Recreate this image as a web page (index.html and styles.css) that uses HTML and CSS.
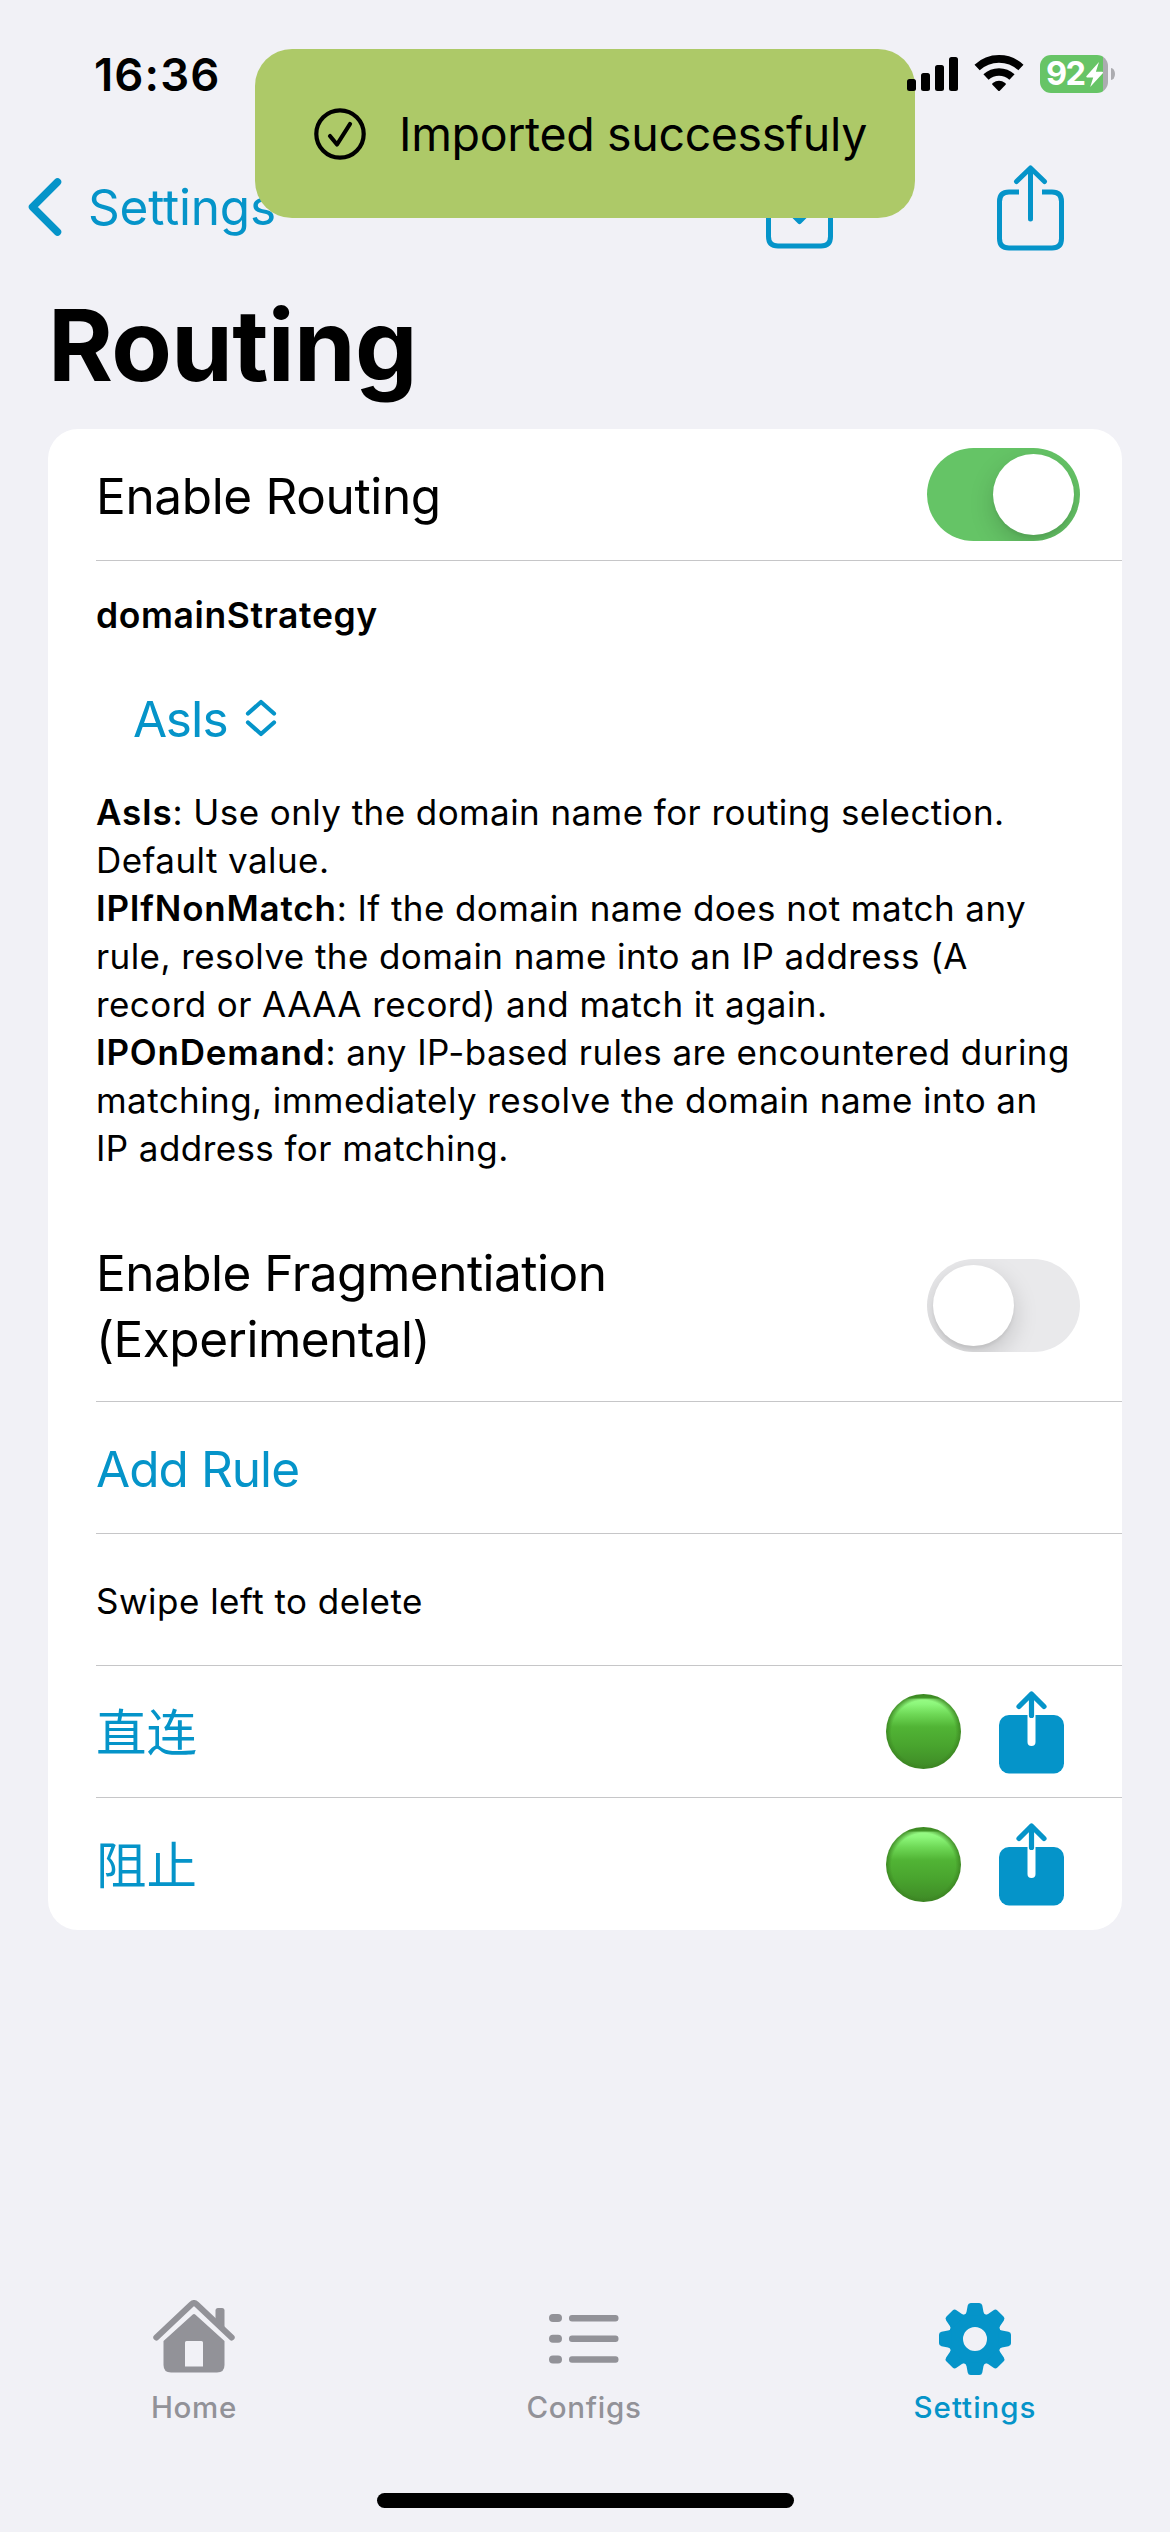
FILE: index.html
```html
<!DOCTYPE html>
<html lang="en">
<head>
<meta charset="utf-8">
<title>Routing</title>
<link rel="stylesheet" href="styles.css">
</head>
<body>
<div class="screen">
  <header class="status-bar">
    <span class="time">16:36</span>
    <div class="indicators">
      <svg class="signal" width="51" height="34" viewBox="0 0 51 34">
        <rect x="0" y="22" width="9" height="12" rx="2.5"/>
        <rect x="14" y="16" width="9" height="18" rx="2.5"/>
        <rect x="28" y="8" width="9" height="26" rx="2.5"/>
        <rect x="42" y="0" width="9" height="34" rx="2.5"/>
      </svg>
      <svg class="wifi" width="50" height="36" viewBox="-25 -36 50 36">
        <path class="wave" d="M-21.9-23.5A32.1 32.1 0 0 1 21.9-23.5"/>
        <path class="wave" d="M-13-13.9A19 19 0 0 1 13-13.9"/>
        <path d="M-6.8-6.5Q-7-7.4-6.2-8A10.8 10.8 0 0 1 6.2-8Q7-7.4 6.8-6.5L.8-.3Q0 .3-.8-.3Z"/>
      </svg>
      <div class="battery">
        <div class="cell">
          <span class="level">92</span>
          <svg width="17" height="25" viewBox="0 0 17 25"><path d="M13 0 .3 14.2Q0 15.2 1 15.4H7.2L4.2 25 17 11Q17.200 10 16.200 9.800H9.900Z"/></svg>
        </div>
        <div class="nub"></div>
      </div>
    </div>
  </header>

  <nav class="nav-bar">
    <a class="back">
      <svg width="34" height="58" viewBox="0 0 34 58"><path d="M29.500 4 4.500 29 29.500 54"/></svg>
      <span>Settings</span>
    </a>
    <div class="nav-actions">
      <svg width="67" height="86" viewBox="0 0 67 86">
        <path d="M22 25.500H12Q2.500 25.500 2.500 35V71.500Q2.500 81 12 81H55Q64.500 81 64.500 71.500V35Q64.500 25.500 55 25.500H45"/>
        <path class="round" d="M33.500 2.500V56M20 43 33.500 56.500 47 43"/>
      </svg>
      <svg width="67" height="86" viewBox="0 0 67 86">
        <path d="M22 27H12Q2.500 27 2.500 36.500V73.500Q2.500 83 12 83H55Q64.500 83 64.500 73.500V36.500Q64.500 27 55 27H45"/>
        <path class="round" d="M33.500 54V3.500M19.500 16.500 33.500 3 47.500 16.500"/>
      </svg>
    </div>
  </nav>

  <h1>Routing</h1>

  <main class="card">
    <section class="row">
      <span class="label">Enable Routing</span>
      <span class="toggle on"><i></i></span>
    </section>
    <section class="strategy">
      <h2>domainStrategy</h2>
      <div class="picker">
        <span>AsIs</span>
        <svg width="32" height="38" viewBox="0 0 32 38"><path d="M3 14.500 16 3 29 14.500M3 23.500 16 35 29 23.500"/></svg>
      </div>
      <p><b>AsIs</b>: Use only the domain name for routing selection.<br>Default value.<br><b>IPIfNonMatch</b>: If the domain name does not match any<br>rule, resolve the domain name into an IP address (A<br>record or AAAA record) and match it again.<br><b>IPOnDemand</b>: any IP-based rules are encountered during<br>matching, immediately resolve the domain name into an<br>IP address for matching.</p>
    </section>
    <section class="row fragment">
      <span>Enable Fragmentiation<br>(Experimental)</span>
      <span class="toggle"><i></i></span>
    </section>
    <section class="row link add"><span class="label">Add Rule</span></section>
    <section class="row hint"><span class="label">Swipe left to delete</span></section>
    <section class="row link">
      <span class="rule" lang="zh-CN">直连</span>
      <span class="rule-actions">
        <i class="dot"></i>
        <svg width="65" height="84" viewBox="0 0 65 84">
          <rect y="25" width="65" height="58.500" rx="10"/>
          <path class="slot" d="M32.500 22V52"/>
          <path class="arrow" d="M32.500 25.500V4M20 16.500 32.500 4 45 16.500"/>
        </svg>
      </span>
    </section>
    <section class="row link">
      <span class="rule" lang="zh-CN">阻止</span>
      <span class="rule-actions">
        <i class="dot"></i>
        <svg width="65" height="84" viewBox="0 0 65 84">
          <rect y="25" width="65" height="58.500" rx="10"/>
          <path class="slot" d="M32.500 22V52"/>
          <path class="arrow" d="M32.500 25.500V4M20 16.500 32.500 4 45 16.500"/>
        </svg>
      </span>
    </section>
  </main>

  <footer class="tab-bar">
    <a class="tab">
      <svg width="82" height="76" viewBox="0 0 82 76">
        <path class="roof" d="M3.300 37.500 38.500 4.200Q41 2 43.500 4.200L78.700 37.500"/>
        <path d="M62.500 20V10.500Q62.500 8 65 8H69Q71.500 8 71.500 10.500V29Z"/>
        <path fill-rule="evenodd" d="M10.500 41 39.500 14.700Q41 13.500 42.500 14.700L71.500 41V65Q71.500 72.500 64 72.500H18Q10.500 72.500 10.500 65ZM32 42.500V66.500H50V42.500Q50 41 48.500 41H33.500Q32 41 32 42.500Z"/>
      </svg>
      <span>Home</span>
    </a>
    <a class="tab">
      <svg width="70" height="76" viewBox="0 0 70 76">
        <rect x="0" y="14" width="13" height="8" rx="4"/><rect x="20" y="15" width="49.500" height="6.500" rx="3"/>
        <rect x="0" y="34.700" width="13" height="8" rx="4"/><rect x="20" y="35.500" width="49.500" height="6.500" rx="3"/>
        <rect x="0" y="55.500" width="13" height="8" rx="4"/><rect x="20" y="56.300" width="49.500" height="6.500" rx="3"/>
      </svg>
      <span>Configs</span>
    </a>
    <a class="tab active">
      <svg width="76" height="76" viewBox="-38 -39 76 76">
        <defs><path id="tooth" d="M-11.500-23.500Q-9-24.500-8.500-27L-7.300-33.500Q-6.800-36-4.300-36H4.300Q6.800-36 7.300-33.500L8.500-27Q9-24.500 11.500-23.500Z"/></defs>
        <circle r="19.200"/>
        <use href="#tooth"/><use href="#tooth" transform="rotate(45)"/><use href="#tooth" transform="rotate(90)"/><use href="#tooth" transform="rotate(135)"/><use href="#tooth" transform="rotate(180)"/><use href="#tooth" transform="rotate(225)"/><use href="#tooth" transform="rotate(270)"/><use href="#tooth" transform="rotate(315)"/>
      </svg>
      <span>Settings</span>
    </a>
  </footer>
  <div class="home-indicator"></div>

  <div class="toast">
    <svg width="52" height="52" viewBox="0 0 52 52"><circle cx="26" cy="26" r="23.700"/><path d="M16 28 23 36.500 36 16"/></svg>
    <span>Imported successfuly</span>
  </div>
</div>
</body>
</html>
```

FILE: styles.css
```css
* { box-sizing: border-box; }

body {
  margin: 0;
  background: #f1f1f6;
  color: #000;
  font-family: Inter, "Noto Sans CJK SC", sans-serif;
}

svg { display: block; flex: none; }

.screen {
  position: relative;
  width: 1170px;
  height: 2532px;
  display: flex;
  flex-direction: column;
}

/* Status bar */
.status-bar {
  position: relative;
  z-index: 2;
  height: 141px;
  padding: 55px 55px 0 94px;
  display: flex;
  justify-content: space-between;
  align-items: flex-start;
}

.time {
  font-size: 45.5px;
  font-weight: 600;
  line-height: 40px;
  letter-spacing: 1.1px;
}

.indicators { display: flex; align-items: flex-start; }
.signal { margin-top: 2px; }
.wifi { margin: 0 16px; }
.wave { fill: none; stroke: #000; stroke-width: 7.6; }

.battery { display: flex; align-items: center; gap: 3px; }

.cell {
  width: 68px;
  height: 38px;
  padding-left: 6px;
  border-radius: 11px;
  background: linear-gradient(90deg, #67c466 63px, #acacb0 63px);
  display: flex;
  align-items: center;
}

.level {
  width: 40px;
  color: #fff;
  font-size: 32.5px;
  font-weight: 700;
  line-height: 38px;
  letter-spacing: -1.5px;
}

.cell svg { fill: #fff; }

.nub {
  width: 4px;
  height: 12px;
  border-radius: 0 4px 4px 0 / 0 6px 6px 0;
  background: #acacb0;
}

/* Navigation */
.nav-bar {
  height: 132px;
  padding: 0 106px 0 28px;
  display: flex;
  align-items: center;
  justify-content: space-between;
  color: #0594c9;
}

.back {
  display: flex;
  align-items: center;
  gap: 26px;
  font-size: 49.5px;
  letter-spacing: -0.2px;
}

.back svg { fill: none; stroke: currentColor; stroke-width: 7.5; stroke-linecap: round; stroke-linejoin: round; }

.nav-actions { display: flex; gap: 164px; padding-top: 2px; }
.nav-actions svg { fill: none; stroke: currentColor; stroke-width: 5; stroke-linejoin: round; }
.nav-actions .round { stroke-linecap: round; }

h1 {
  margin: 0;
  padding-left: 48px;
  font-size: 99px;
  font-weight: 700;
  line-height: 144px;
  letter-spacing: -0.65px;
}

/* Settings card */
.card {
  margin: 12px 48px 0;
  border-radius: 30px;
  background: #fff;
}

.row {
  height: 132px;
  margin-left: 48px;
  padding-right: 42px;
  display: flex;
  align-items: center;
  justify-content: space-between;
  border-bottom: 1px solid #c6c6c8;
  font-size: 49.5px;
  line-height: 66px;
  letter-spacing: -0.35px;
}

.row:last-child { border-bottom: 0; }
.label { padding-top: 2px; }
.link { color: #0594c9; padding-right: 58px; }
.add { letter-spacing: -0.95px; }

.toggle {
  width: 153px;
  height: 93px;
  padding: 6px;
  border-radius: 47px;
  overflow: hidden;
  background: #e9e9eb;
  display: flex;
}

.toggle i {
  width: 81px;
  height: 81px;
  border-radius: 50%;
  background: #fff;
  box-shadow: 0 9px 24px rgba(0, 0, 0, 0.17), 0 3px 3px rgba(0, 0, 0, 0.05);
}

.toggle.on { background: #65c466; justify-content: flex-end; }

.strategy { padding: 31px 0 0 48px; }

h2 {
  margin: 0;
  font-size: 35.5px;
  font-weight: 600;
  line-height: 48px;
  letter-spacing: 0.62px;
}

.picker {
  margin-top: 47px;
  padding-left: 37px;
  display: flex;
  align-items: center;
  gap: 18px;
  color: #0594c9;
  font-size: 49.5px;
  line-height: 64px;
  letter-spacing: -1.35px;
}

.picker svg { margin-top: -2px; fill: none; stroke: currentColor; stroke-width: 4.200; stroke-linecap: round; stroke-linejoin: round; }

.strategy p {
  margin: 37px 0 0;
  font-size: 35px;
  line-height: 48px;
  letter-spacing: 0.42px;
  white-space: nowrap;
}

.strategy b { font-weight: 600; letter-spacing: 0.8px; }

.fragment { height: 230px; padding-top: 39px; letter-spacing: -0.5px; }
.fragment .toggle { margin-top: -2px; }
.hint { font-size: 35px; letter-spacing: 0.48px; }

.rule {
  padding-bottom: 5px;
  font-family: "Noto Sans CJK SC", sans-serif;
  font-size: 50.5px;
  line-height: 66px;
  letter-spacing: 0;
}

.rule-actions { display: flex; align-items: center; gap: 38px; }

.dot {
  width: 75px;
  height: 75px;
  border-radius: 50%;
  background:
    radial-gradient(circle at 50% 51%, transparent 32px, rgba(58, 130, 32, 0.75) 37px),
    linear-gradient(#45a32c 4px, #97fb85 5px, #8df77b 10px, #6fd957 20px, #51b435 33px, #49a42e 52px, #3e8926 75px);
}

.link svg { fill: #0594c9; }
.link .slot { fill: none; stroke: #fff; stroke-width: 8; stroke-linecap: round; }
.link .arrow { fill: none; stroke: #0594c9; stroke-width: 5.200; stroke-linecap: round; stroke-linejoin: round; }

/* Tab bar */
.tab-bar {
  margin-top: auto;
  height: 193px;
  padding: 0 1px 0 -1px;
  display: grid;
  grid-template-columns: 388px 392px 390px;
}

.tab {
  display: flex;
  flex-direction: column;
  align-items: center;
  gap: 11px;
  color: #929298;
  font-size: 29.5px;
  font-weight: 500;
  line-height: 40px;
  letter-spacing: 0.7px;
}

.tab svg { fill: currentColor; }
.roof { fill: none; stroke: currentColor; stroke-width: 6; stroke-linecap: round; }
.active { color: #0594c9; letter-spacing: 1px; }
.active circle { fill: none; stroke: currentColor; stroke-width: 14.400; }

.home-indicator {
  width: 417px;
  height: 15px;
  margin: 0 auto 24px;
  border-radius: 8px;
  background: #000;
}

/* Notification over the navigation */
.toast {
  position: absolute;
  z-index: 1;
  top: 49px;
  left: 255px;
  width: 660px;
  height: 169px;
  padding-left: 59px;
  border-radius: 37px;
  background: #adc968;
  display: flex;
  align-items: center;
  gap: 33px;
  font-size: 46.5px;
  letter-spacing: -0.35px;
  white-space: nowrap;
}

.toast svg { fill: none; stroke: #000; stroke-width: 4.200; stroke-linecap: round; stroke-linejoin: round; }
```
